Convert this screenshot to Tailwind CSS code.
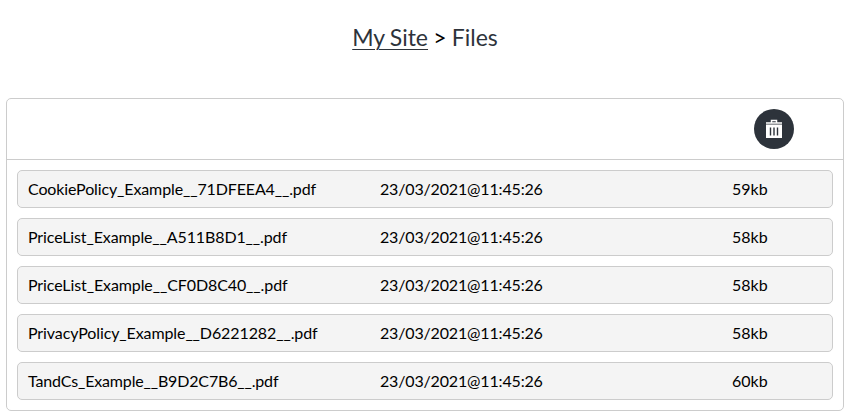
<!DOCTYPE html>
<html lang="en">
<head>
<meta charset="utf-8">
<title>Files</title>
<script src="https://cdn.jsdelivr.net/npm/@tailwindcss/browser@4"></script>
</head>
<body class="bg-white text-black text-base leading-6 font-['Lato',sans-serif] overflow-hidden">
<h1 class="pt-[19px] h-[98px] text-[23px] leading-9 text-center text-[#2d333b] pr-[3px] [word-spacing:-0.7px]"><a href="#" class="underline decoration-1 underline-offset-[3px]">My Site</a> <span class="text-black">&gt;</span> Files</h1>
<main class="ml-1.5 w-[838px] h-[313px] border border-[#ccc] rounded-[5px]">
  <div class="h-[61px] border-b border-[#ccc] flex items-center justify-end pr-[49px]">
    <button class="size-10 rounded-full bg-[#2d333b] flex items-center justify-center" aria-label="Delete">
      <svg class="w-4 h-5" viewBox="0 0 16 20" fill="none" stroke="white"><path d="M0 4h16M5.500 4V1.500h5V4" stroke-width="1.500"/><path fill="white" stroke="none" d="M0 5.500h16V19H0z"/><path d="M4.500 8.500v8M8 8.500v8M11.500 8.500v8" stroke="#2d333b" stroke-width="1.400"/></svg>
    </button>
  </div>
  <ul class="p-2.5 flex flex-col gap-2.5">
    <li class="h-[38px] border border-[#ccc] rounded-[5px] bg-[#f4f4f4] px-2.5 grid grid-cols-[352px_352px_1fr] items-center"><span class="tracking-[-0.125px]">CookiePolicy_Example__71DFEEA4__.pdf</span><span class="tracking-[-0.16px]">23/03/2021@11:45:26</span><span>59kb</span></li>
    <li class="h-[38px] border border-[#ccc] rounded-[5px] bg-[#f4f4f4] px-2.5 grid grid-cols-[352px_352px_1fr] items-center"><span class="tracking-[-0.12px]">PriceList_Example__A511B8D1__.pdf</span><span class="tracking-[-0.16px]">23/03/2021@11:45:26</span><span>58kb</span></li>
    <li class="h-[38px] border border-[#ccc] rounded-[5px] bg-[#f4f4f4] px-2.5 grid grid-cols-[352px_352px_1fr] items-center"><span class="tracking-[-0.1px]">PriceList_Example__CF0D8C40__.pdf</span><span class="tracking-[-0.16px]">23/03/2021@11:45:26</span><span>58kb</span></li>
    <li class="h-[38px] border border-[#ccc] rounded-[5px] bg-[#f4f4f4] px-2.5 grid grid-cols-[352px_352px_1fr] items-center"><span class="tracking-[-0.1px]">PrivacyPolicy_Example__D6221282__.pdf</span><span class="tracking-[-0.16px]">23/03/2021@11:45:26</span><span>58kb</span></li>
    <li class="h-[38px] border border-[#ccc] rounded-[5px] bg-[#f4f4f4] px-2.5 grid grid-cols-[352px_352px_1fr] items-center"><span class="tracking-[-0.16px]">TandCs_Example__B9D2C7B6__.pdf</span><span class="tracking-[-0.16px]">23/03/2021@11:45:26</span><span>60kb</span></li>
  </ul>
</main>
</body>
</html>
